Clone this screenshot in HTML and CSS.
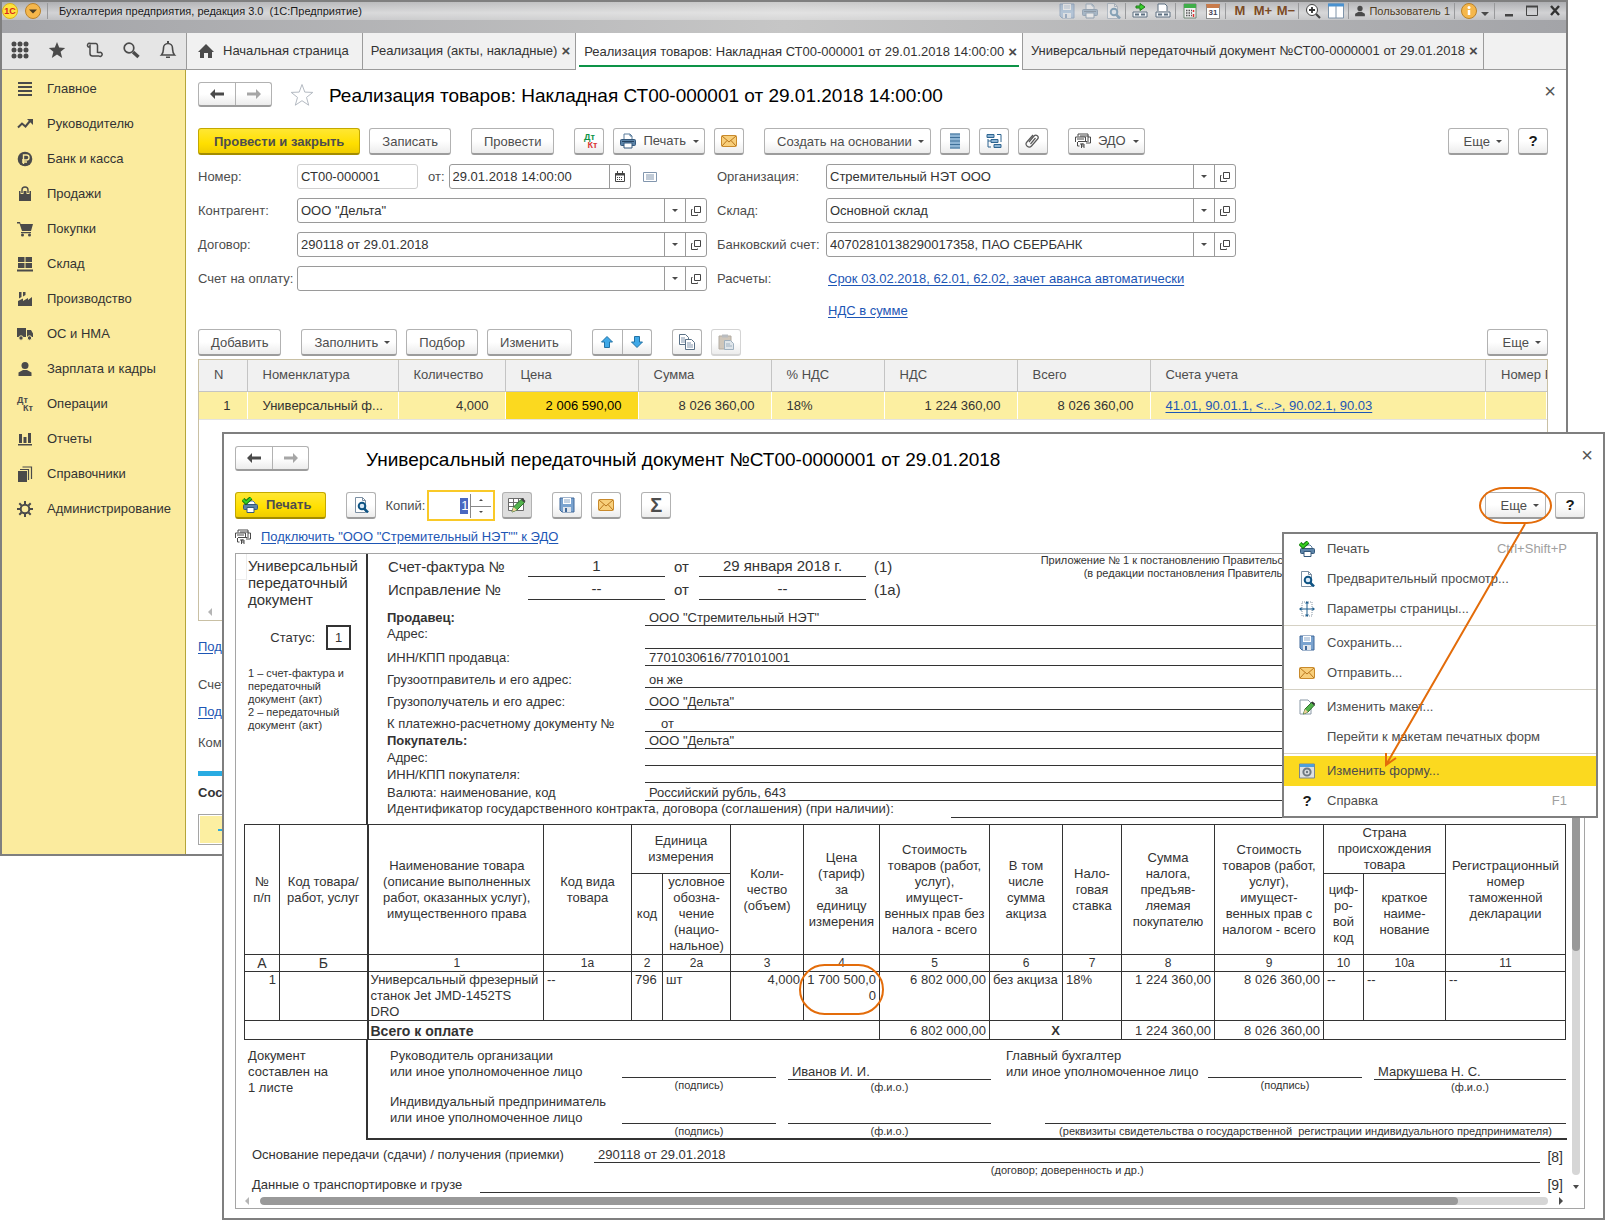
FILE: index.html
```html
<!DOCTYPE html>
<html lang="ru">
<head>
    <meta charset="UTF-8">
    <meta name="viewport" content="width=device-width, initial-scale=1.0">
    <title>Бухгалтерия предприятия, редакция 3.0</title>
    <link rel="stylesheet" href="styles.css">
</head>
<body>
    <!-- icon set -->
    <svg class="sprite" aria-hidden="true">
        <symbol id="i-save" viewBox="0 0 16 16"><path d="M1 1h14v14H3l-2-2z" fill="#7aa3cf" stroke="#41699a"/><path d="M4 1h8v6H4z" fill="#fff"/><path d="M5 3h6M5 5h6" stroke="#8aa7c8"/><path d="M4 10h8v5H4z" fill="#dfe5ec"/><path d="M6 11h2v4H6z" fill="#41699a"/></symbol>
        <symbol id="i-print" viewBox="0 0 16 16"><path d="M4 7V1h6l2 2v4" fill="#fff" stroke="#5b7d9c"/><path d="M10 1v2h2" fill="none" stroke="#5b7d9c"/><rect x="0.5" y="6.500" width="15" height="6" rx="1" fill="#5c84a8" stroke="#34587c"/><path d="M2 8.500h12" stroke="#23415f"/><path d="M4 10h8v5H4z" fill="#fff" stroke="#34587c"/></symbol>
        <symbol id="i-printok" viewBox="0 0 16 16"><path d="M5 8V4h6l2 2v2" fill="#fff" stroke="#5b7d9c"/><rect x="1.500" y="7.500" width="14" height="5" rx="1" fill="#5c84a8" stroke="#34587c"/><path d="M5 10.500h7v5H5z" fill="#fff" stroke="#34587c"/><path d="M1 2.500l3 3L9 1" fill="none" stroke="#12690f" stroke-width="4"/><path d="M1 2.500l3 3L9 1" fill="none" stroke="#35d01f" stroke-width="2.200"/></symbol>
        <symbol id="i-preview" viewBox="0 0 16 16"><path d="M2.500 .5h7l3 3v12h-10z" fill="#fff" stroke="#7b8fa3"/><path d="M9.500.5v3h3" fill="none" stroke="#7b8fa3"/><circle cx="9" cy="9" r="3.300" fill="#d8e9f7" stroke="#0f5484" stroke-width="2"/><path d="M11 11.500l4 4" stroke="#0f5484" stroke-width="2.500"/></symbol>
        <symbol id="i-mail" viewBox="0 0 16 16"><rect x="0.500" y="2.500" width="15" height="11" rx="1" fill="#f8cf7b" stroke="#c98a2c"/><path d="M1 3l7 6 7-6M1 13l5-5.500M15 13l-5-5.500" fill="none" stroke="#b9761c"/></symbol>
        <symbol id="i-list" viewBox="0 0 16 16"><path d="M3 .5h10v15H3z" fill="#8db4d4"/><path d="M3 1h10M3 4.500h10M3 8h10M3 11.500h10M3 15h10" stroke="#3f7099"/></symbol>
        <symbol id="i-tree" viewBox="0 0 16 16"><path d="M1 1.500h7v3H1zM5 6.500h7v3H5zM8 11.500h7v3H8z" fill="#8db4d4" stroke="#2e6590"/><path d="M2 6v8h3M11 1.500h4V9M2 8h3" fill="none" stroke="#2e6590"/></symbol>
        <symbol id="i-clip" viewBox="0 0 16 16"><path d="M4 9l5-6a2.200 2.200 0 0 1 3.600 3L6.500 13a3 3 0 0 1-4.600-4L8 2M5.500 11l5-6" fill="none" stroke="#5a5a5a" stroke-width="1.200"/></symbol>
        <symbol id="i-edo" viewBox="0 0 16 16"><path d="M3 3.500V1h10v8M5 3h8.500M.5 9V4h10v5M13 4h2.500v6H13M2 6h7M2.500 9v4h2M3 8.500h9V11M5 11h3" fill="none" stroke="#4a4a4a"/><path d="M6.500 15v-4h2.500v4M6.500 13H9" fill="none" stroke="#4a4a4a"/></symbol>
        <symbol id="i-open" viewBox="0 0 12 12"><path d="M4.500 1.500h6v6h-6zM2.500 4.500h-1v6h6v-1" fill="none" stroke="#444"/></symbol>
        <symbol id="i-cal" viewBox="0 0 12 12"><path d="M1.500 2.500h9v8h-9z" fill="none" stroke="#444"/><path d="M1 3.500h10" stroke="#444" stroke-width="2"/><path d="M3.500 0v3M8.500 0v3" stroke="#444"/><path d="M3 6.500h6M3 8.500h6" stroke="#444" stroke-dasharray="1 1"/></symbol>
        <symbol id="i-note" viewBox="0 0 14 12"><path d="M.5 1.500h13v9H.5z" fill="#fff" stroke="#8296ae"/><path d="M3 4h8M3 6h8M3 8h8" stroke="#8296ae"/></symbol>
        <symbol id="i-up" viewBox="0 0 14 14"><path d="M7 1.500l5.500 5.500H9.500v5.500h-5V7H1.500z" fill="#3fa9e8" stroke="#2272a5"/></symbol>
        <symbol id="i-down" viewBox="0 0 14 14"><path d="M7 12.500L1.500 7h3V1.500h5V7h3z" fill="#3fa9e8" stroke="#2272a5"/></symbol>
        <symbol id="i-copy" viewBox="0 0 16 16"><path d="M.5.500h6l3 3v7h-9z" fill="#fff" stroke="#5a7187"/><path d="M2 4h4M2 6h5M2 8h4" stroke="#8296ae"/><path d="M6.500 5.500h6l3 3v7h-9z" fill="#fff" stroke="#5a7187"/><path d="M8 9h4M8 11h6M8 13h6" stroke="#8296ae"/></symbol>
        <symbol id="i-paste" viewBox="0 0 16 16"><path d="M1 2h12v13H1z" fill="#cfc6ba" stroke="#b3aca2"/><path d="M4 .5h6v3H4z" fill="#b9bcc0"/><path d="M6.500 6.500h6l3 3v6h-9z" fill="#dfe5ea" stroke="#9fb0bf"/><path d="M8 10h4M8 12h6" stroke="#9fb0bf"/></symbol>
        <symbol id="i-edit" viewBox="0 0 18 16"><path d="M.5 1.500h15v12H.5zM.5 5.500h15M.5 9.500h9M5.500 1.500v12M10.500 1.500v6" fill="#fff" stroke="#6b6b6b"/><path d="M4 15l1.500-5L13 2.500l3.500 3L9 13z" fill="#53b34c" stroke="#2c6e2a"/><path d="M13 2.500l3.500 3 1-1.500-3-3z" fill="#444"/><path d="M4 15l1.500-5L9 13z" fill="#f0cf9a"/></symbol>
        <symbol id="i-editpage" viewBox="0 0 16 16"><path d="M1 1h8l3 3v11H1z" fill="#fff" stroke="#8a98a6"/><path d="M4.500 15L6 10l6.500-6.500 3 2.500L9 13z" fill="#53b34c" stroke="#2c6e2a"/><path d="M12 3.500l3.500 3 .5-2-2.500-2z" fill="#333"/><path d="M4.500 15L6 10l3 3z" fill="#f0cf9a"/></symbol>
        <symbol id="i-pageset" viewBox="0 0 16 16"><path d="M3 1h10v14H3z" fill="none" stroke="#8a98a6" stroke-dasharray="1 1"/><path d="M8 1v14M1 8h14" stroke="#1f5f8f"/><path d="M8 0l2 2.500H6zM8 16l2-2.500H6zM0 8l2.500-2v4zM16 8l-2.500-2v4z" fill="#1f5f8f"/></symbol>
        <symbol id="i-form" viewBox="0 0 16 16"><path d="M.5 1h15v14H.5z" fill="#dcdfe2" stroke="#7d868f"/><path d="M1 1h14v3H1z" fill="#4d9fdc"/><circle cx="8" cy="9" r="3.600" fill="none" stroke="#6e7882" stroke-width="2"/><circle cx="8" cy="9" r="1.200" fill="#6e7882"/></symbol>
        <symbol id="i-back" viewBox="0 0 14 12"><path d="M0 6l5-5v3.500h9v3H5V11z"/></symbol>
        <symbol id="i-fwd" viewBox="0 0 14 12"><path d="M14 6L9 1v3.500H0v3h9V11z"/></symbol>
        <symbol id="i-linkgo" viewBox="0 0 16 16"><path d="M4 3h4V.5L13 4 8 7.500V5H4z" fill="#37d02c" stroke="#217a1a"/><path d="M1 9h14v5H1z" fill="#f4f6f8" stroke="#5c6f80"/><path d="M3 11.500h4M9 11.500h4" stroke="#5c6f80" stroke-width="2"/></symbol>
        <symbol id="i-linkdoc" viewBox="0 0 16 16"><path d="M3 8V1h7l2 2v5" fill="#fff" stroke="#5c6f80"/><path d="M1 9h14v5H1z" fill="#f4f6f8" stroke="#5c6f80"/><path d="M3 11.500h4M9 11.500h4" stroke="#5c6f80" stroke-width="2"/></symbol>
        <symbol id="i-calc" viewBox="0 0 16 16"><path d="M2 1h12v14H2z" fill="#f1f1f1" stroke="#6f8573"/><path d="M2 1h12v4H2z" fill="#3fae49"/><path d="M4 7.500h6M4 10h6M4 12.500h6" stroke="#555" stroke-width="1.500" stroke-dasharray="1.500 1"/><path d="M11.500 7v2M11.500 11v3" stroke="#d33" stroke-width="1.500"/></symbol>
        <symbol id="i-zoom" viewBox="0 0 16 16"><circle cx="7" cy="7" r="5.500" fill="#fff" stroke="#444"/><path d="M7 4v6M4 7h6" stroke="#333" stroke-width="1.800"/><path d="M11 11l4 4" stroke="#444" stroke-width="2.200"/></symbol>
        <symbol id="i-panes" viewBox="0 0 16 16"><path d="M.5 1h15v14H.5z" fill="#fff" stroke="#7e93a8"/><path d="M0 .5h16v3H0z" fill="#4a92d0"/><path d="M8 3v12" stroke="#7e93a8"/></symbol>
        <symbol id="i-user" viewBox="0 0 16 16"><circle cx="8" cy="4.500" r="3.500"/><path d="M1.500 15v-3.500L6 9h4l4.500 2.500V15z"/></symbol>
        <symbol id="i-main" viewBox="0 0 16 16"><path d="M1 1h14v2H1zM1 5h14v2H1zM1 9h14v2H1zM1 13h14v2H1z"/></symbol>
        <symbol id="i-trend" viewBox="0 0 16 16"><path d="M1 11.500l4-4 3.500 3L13 5" fill="none" stroke="#4a4a4a" stroke-width="2"/><path d="M10 3h6v6z"/></symbol>
        <symbol id="i-rub" viewBox="0 0 16 16"><circle cx="8" cy="8" r="7.300"/><path d="M6.500 13V4h3a2.300 2.300 0 0 1 0 5H5M5 11h5" fill="none" stroke="#fbeb9e" stroke-width="1.400"/></symbol>
        <symbol id="i-bag" viewBox="0 0 16 16"><path d="M2 5h12v10H2z"/><path d="M5 8V4a3 3 0 0 1 6 0v4" fill="none" stroke="#fbeb9e" stroke-width="3"/><path d="M5 7V4a3 3 0 0 1 6 0v3" fill="none" stroke="#4a4a4a" stroke-width="1.400"/></symbol>
        <symbol id="i-cart" viewBox="0 0 16 16"><path d="M0 1h3l.6 2H16l-2 7H5L2.500 2.500H0zM4 11h10v1.300H4z"/><circle cx="5.500" cy="14" r="1.500"/><circle cx="12.500" cy="14" r="1.500"/></symbol>
        <symbol id="i-store" viewBox="0 0 16 16"><path d="M1 1h6.500v5H1zM8.500 1H15v5H8.500zM1 7h6.500v5H1zM8.500 7H15v5H8.500zM0 13.500h16v2H0z"/></symbol>
        <symbol id="i-plant" viewBox="0 0 16 16"><path d="M1 15V10l5-2.500V10l5-3v2l4-3v9zM2 1h2.500v5L2 7.500zM6 1h2.500v3L6 5.500z"/></symbol>
        <symbol id="i-truck" viewBox="0 0 16 16"><path d="M0 2h9v9H0zM10 4h4l2 3.500V11h-6z"/><circle cx="4" cy="12" r="2.200" stroke="#fbeb9e"/><circle cx="12.500" cy="12" r="2.200" stroke="#fbeb9e"/></symbol>
        <symbol id="i-bars" viewBox="0 0 16 16"><path d="M2 3h3v9H2zM6.500 6h3v6h-3zM11 2h3v10h-3zM1 13h14v1.600H1z"/></symbol>
        <symbol id="i-books" viewBox="0 0 16 16"><path d="M1 5h9v11H1z"/><path d="M3 3.500h8.500V14M5.500 1h9v12" fill="none" stroke="#4a4a4a" stroke-width="1.200"/></symbol>
        <symbol id="i-gear" viewBox="0 0 16 16"><circle cx="8" cy="8" r="4.300" fill="none" stroke="#4a4a4a" stroke-width="2"/><path d="M8 0v3M8 13v3M0 8h3M13 8h3M2.300 2.300l2.200 2.200M11.500 11.500l2.200 2.200M13.700 2.300l-2.200 2.200M4.500 11.500l-2.200 2.200" stroke="#4a4a4a" stroke-width="2"/></symbol>
        <symbol id="i-home" viewBox="0 0 16 16"><path d="M8 1l8 8h-2v6h-4v-5H6v5H2V9H0z"/></symbol>
    </svg>

    <div class="desktop">
        <div class="window main-window">
            <header class="titlebar">
                <div class="title-row">
                    <span class="logo">1С</span>
                    <svg class="round" viewBox="0 0 16 16"><circle cx="8" cy="8" r="7.500" fill="#f5b74b" stroke="#b9822b"/><path d="M4 6.500h8L8 10.500z" fill="#4a3c22"/></svg>
                    <i class="tb-sep"></i>
                    <span class="app-name">Бухгалтерия предприятия, редакция 3.0&nbsp; (1С:Предприятие)</span>
                    <div class="tb-tools">
                        <button class="tb dim" title="Сохранить"><svg><use href="#i-save"/></svg></button>
                        <button class="tb dim" title="Печать"><svg><use href="#i-print"/></svg></button>
                        <button class="tb dim" title="Просмотр"><svg><use href="#i-preview"/></svg></button>
                        <i class="tb-sep"></i>
                        <button class="tb" title="Перейти по ссылке"><svg><use href="#i-linkgo"/></svg></button>
                        <button class="tb" title="Получить ссылку"><svg><use href="#i-linkdoc"/></svg></button>
                        <i class="tb-sep"></i>
                        <button class="tb" title="Калькулятор"><svg><use href="#i-calc"/></svg></button>
                        <button class="tb" title="Календарь"><span class="day">31</span></button>
                        <i class="tb-sep"></i>
                        <button class="tb mem">M</button>
                        <button class="tb mem">M+</button>
                        <button class="tb mem">M−</button>
                        <i class="tb-sep"></i>
                        <button class="tb" title="Масштаб"><svg><use href="#i-zoom"/></svg></button>
                        <button class="tb" title="Панели"><svg><use href="#i-panes"/></svg></button>
                        <i class="tb-sep"></i>
                        <button class="tb-user"><svg><use href="#i-user"/></svg>Пользователь 1</button>
                        <i class="tb-sep"></i>
                        <button class="tb" title="О программе"><svg viewBox="0 0 16 16"><circle cx="8" cy="8" r="7.500" fill="#f5b74b" stroke="#b9822b"/><path d="M8 7v5" stroke="#fff" stroke-width="2.500"/><circle cx="8" cy="4.500" r="1.500" fill="#fff"/></svg></button>
                        <span class="caret"></span>
                        <i class="tb-sep"></i>
                        <button class="tb" title="Свернуть"><svg viewBox="0 0 16 16"><path d="M4 11h8v2.500H4z" fill="#444"/></svg></button>
                        <button class="tb" title="Развернуть"><svg viewBox="0 0 16 16"><path d="M2.500 3.500h11v9h-11z" fill="none" stroke="#444"/><path d="M2 3.500h12" stroke="#444" stroke-width="2"/></svg></button>
                        <button class="tb" title="Закрыть"><svg viewBox="0 0 16 16"><path d="M4 3l8 9M12 3l-8 9" stroke="#333" stroke-width="2.400"/></svg></button>
                    </div>
                </div>
            </header>

            <div class="tabs-row">
                <div class="quick">
                    <button title="Меню"><svg viewBox="0 0 18 18"><path d="M3 3h.01M9 3h.01M15 3h.01M3 9h.01M9 9h.01M15 9h.01M3 15h.01M9 15h.01M15 15h.01" stroke="#4a4a4a" stroke-width="5" stroke-linecap="round"/></svg></button>
                    <button title="Избранное"><svg viewBox="0 0 18 18"><path d="M9 1l2.200 5.600 6 .4-4.600 3.800L14.200 17 9 13.500 3.800 17l1.600-6.200L.8 7l6-.4z" fill="#4a4a4a"/></svg></button>
                    <button title="История"><svg viewBox="0 0 18 18"><path d="M5 6H3.500A2 2 0 1 1 5.500 2.500h5.500a2 2 0 0 1 1.500 2V12M5 3.500v9a2.500 2.500 0 0 0 2.500 2.500H14a2 2 0 1 0 .5-3.500h-2" fill="none" stroke="#4a4a4a" stroke-width="1.500"/></svg></button>
                    <button title="Поиск"><svg viewBox="0 0 18 18"><circle cx="7" cy="7" r="4.800" fill="none" stroke="#4a4a4a" stroke-width="1.700"/><path d="M11 11l5.500 5" stroke="#4a4a4a" stroke-width="3.400"/></svg></button>
                    <button title="Оповещения"><svg viewBox="0 0 18 18"><path d="M2.500 14c2-2 1.800-4 2-7a4.500 4.500 0 0 1 9 0c.2 3 0 5 2 7z" fill="none" stroke="#4a4a4a" stroke-width="1.600"/><path d="M7 15.500h4v1.500H7zM8 0h2v3H8z" fill="#4a4a4a"/></svg></button>
                </div>
                <nav class="tabs">
                    <a class="tab tab-home" href="#"><svg><use href="#i-home"/></svg>Начальная страница</a>
                    <a class="tab" href="#">Реализация (акты, накладные)<span class="x">×</span></a>
                    <a class="tab active" href="#">Реализация товаров: Накладная СТ00-000001 от 29.01.2018 14:00:00<span class="x">×</span></a>
                    <a class="tab" href="#">Универсальный передаточный документ №СТ00-0000001 от 29.01.2018<span class="x">×</span></a>
                </nav>
            </div>

            <div class="body-row">
                <nav class="sidebar">
                    <a href="#"><svg><use href="#i-main"/></svg>Главное</a>
                    <a href="#"><svg><use href="#i-trend"/></svg>Руководителю</a>
                    <a href="#"><svg><use href="#i-rub"/></svg>Банк и касса</a>
                    <a href="#"><svg><use href="#i-bag"/></svg>Продажи</a>
                    <a href="#"><svg><use href="#i-cart"/></svg>Покупки</a>
                    <a href="#"><svg><use href="#i-store"/></svg>Склад</a>
                    <a href="#"><svg><use href="#i-plant"/></svg>Производство</a>
                    <a href="#"><svg><use href="#i-truck"/></svg>ОС и НМА</a>
                    <a href="#"><svg><use href="#i-user"/></svg>Зарплата и кадры</a>
                    <a href="#"><span class="dtkt gray"><b>Дт</b><b>Кт</b></span>Операции</a>
                    <a href="#"><svg><use href="#i-bars"/></svg>Отчеты</a>
                    <a href="#"><svg><use href="#i-books"/></svg>Справочники</a>
                    <a href="#"><svg><use href="#i-gear"/></svg>Администрирование</a>
                </nav>

                <main class="content">
                    <div class="form-head">
                        <div class="pair nav-pair">
                            <button title="Назад"><svg><use href="#i-back"/></svg></button>
                            <button title="Вперед" class="off"><svg><use href="#i-fwd"/></svg></button>
                        </div>
                        <svg class="fav" viewBox="0 0 24 24"><path d="M12 1.500l2.800 7.600 8 .3-6.300 5 2.200 7.800-6.700-4.500-6.700 4.500 2.200-7.800-6.300-5 8-.3z" fill="#fff" stroke="#b4bac2"/></svg>
                        <h1>Реализация товаров: Накладная СТ00-000001 от 29.01.2018 14:00:00</h1>
                        <button class="close" title="Закрыть">×</button>
                    </div>

                    <div class="toolbar">
                        <button class="btn primary">Провести и закрыть</button>
                        <button class="btn">Записать</button>
                        <button class="btn gap">Провести</button>
                        <button class="btn icon gap" title="Дт/Кт"><span class="dtkt"><b>Дт</b><b>Кт</b></span></button>
                        <button class="btn with-icon"><svg><use href="#i-print"/></svg>Печать<span class="caret"></span></button>
                        <button class="btn icon" title="Отправить"><svg><use href="#i-mail"/></svg></button>
                        <button class="btn drop gap">Создать на основании<span class="caret"></span></button>
                        <button class="btn icon" title="Список"><svg><use href="#i-list"/></svg></button>
                        <button class="btn icon" title="Структура"><svg><use href="#i-tree"/></svg></button>
                        <button class="btn icon" title="Файлы"><svg><use href="#i-clip"/></svg></button>
                        <button class="btn with-icon gap"><svg><use href="#i-edo"/></svg>ЭДО<span class="caret"></span></button>
                        <button class="btn drop push">Еще<span class="caret"></span></button>
                        <button class="btn icon help">?</button>
                    </div>

                    <div class="fields">
                        <div class="fields-left">
                            <div class="field">
                                <label for="num">Номер:</label>
                                <input type="text" id="num" class="box num" value="СТ00-000001">
                                <label for="date" class="from">от:</label>
                                <div class="box date">
                                    <input type="text" id="date" value="29.01.2018 14:00:00">
                                    <button title="Календарь"><svg><use href="#i-cal"/></svg></button>
                                </div>
                                <svg class="note-icon"><use href="#i-note"/></svg>
                            </div>
                            <div class="field">
                                <label for="partner">Контрагент:</label>
                                <div class="box combo">
                                    <select id="partner"><option>ООО "Дельта"</option></select><span class="cell"><span class="caret small"></span></span>
                                    <button title="Открыть"><svg><use href="#i-open"/></svg></button>
                                </div>
                            </div>
                            <div class="field">
                                <label for="contract">Договор:</label>
                                <div class="box combo">
                                    <select id="contract"><option>290118 от 29.01.2018</option></select><span class="cell"><span class="caret small"></span></span>
                                    <button title="Открыть"><svg><use href="#i-open"/></svg></button>
                                </div>
                            </div>
                            <div class="field">
                                <label for="bill">Счет на оплату:</label>
                                <div class="box combo">
                                    <select id="bill"><option></option></select><span class="cell"><span class="caret small"></span></span>
                                    <button title="Открыть"><svg><use href="#i-open"/></svg></button>
                                </div>
                            </div>
                        </div>
                        <div class="fields-right">
                            <div class="field">
                                <label for="org">Организация:</label>
                                <div class="box combo">
                                    <select id="org"><option>Стремительный НЭТ ООО</option></select><span class="cell"><span class="caret small"></span></span>
                                    <button title="Открыть"><svg><use href="#i-open"/></svg></button>
                                </div>
                            </div>
                            <div class="field">
                                <label for="store">Склад:</label>
                                <div class="box combo">
                                    <select id="store"><option>Основной склад</option></select><span class="cell"><span class="caret small"></span></span>
                                    <button title="Открыть"><svg><use href="#i-open"/></svg></button>
                                </div>
                            </div>
                            <div class="field">
                                <label for="bank">Банковский счет:</label>
                                <div class="box combo">
                                    <select id="bank"><option>40702810138290017358, ПАО СБЕРБАНК</option></select><span class="cell"><span class="caret small"></span></span>
                                    <button title="Открыть"><svg><use href="#i-open"/></svg></button>
                                </div>
                            </div>
                            <div class="calc-row">
                                <span>Расчеты:</span>
                                <div class="calc-links">
                                    <a href="#">Срок 03.02.2018, 62.01, 62.02, зачет аванса автоматически</a>
                                    <a href="#">НДС в сумме</a>
                                </div>
                            </div>
                        </div>
                    </div>

                    <div class="toolbar grid-toolbar">
                        <button class="btn">Добавить</button>
                        <button class="btn drop gap">Заполнить<span class="caret"></span></button>
                        <button class="btn">Подбор</button>
                        <button class="btn">Изменить</button>
                        <div class="pair gap">
                            <button title="Вверх"><svg><use href="#i-up"/></svg></button>
                            <button title="Вниз"><svg><use href="#i-down"/></svg></button>
                        </div>
                        <button class="btn icon gap" title="Копировать"><svg><use href="#i-copy"/></svg></button>
                        <button class="btn icon off" title="Вставить"><svg><use href="#i-paste"/></svg></button>
                        <button class="btn drop push">Еще<span class="caret"></span></button>
                    </div>

                    <div class="grid-wrap">
                        <table class="grid">
                            <colgroup><col class="g48"><col class="g151"><col class="g107"><col class="g133"><col class="g133"><col class="g113"><col class="g133"><col class="g133"><col><col class="g61"></colgroup>
                            <thead>
                                <tr><th>N</th><th>Номенклатура</th><th>Количество</th><th>Цена</th><th>Сумма</th><th>% НДС</th><th>НДС</th><th>Всего</th><th>Счета учета</th><th>Номер ГТД</th></tr>
                            </thead>
                            <tbody>
                                <tr><td class="r">1</td><td>Универсальный ф...</td><td class="r">4,000</td><td class="r current">2 006 590,00</td><td class="r">8 026 360,00</td><td>18%</td><td class="r">1 224 360,00</td><td class="r">8 026 360,00</td><td><a href="#">41.01, 90.01.1, &lt;...&gt;, 90.02.1, 90.03</a></td><td></td></tr>
                            </tbody>
                        </table>
                        <span class="arrow-left"></span>
                    </div>

                    <div class="below">
                        <a href="#">Под</a>
                        <span>Счет</span>
                        <a href="#">Под</a>
                        <span>Ком</span>
                    </div>
                    <div class="blue-line"></div>
                    <b class="chat-title">Сос</b>
                    <div class="chat-box"><i></i></div>
                </main>
            </div>
        </div>

        <section class="window doc-window">
            <div class="form-head">
                <div class="pair nav-pair">
                    <button title="Назад"><svg><use href="#i-back"/></svg></button>
                    <button title="Вперед" class="off"><svg><use href="#i-fwd"/></svg></button>
                </div>
                <h2>Универсальный передаточный документ №СТ00-0000001 от 29.01.2018</h2>
                <button class="close" title="Закрыть">×</button>
            </div>

            <div class="toolbar">
                <button class="btn primary print"><svg><use href="#i-printok"/></svg>Печать</button>
                <button class="btn icon gap" title="Просмотр"><svg><use href="#i-preview"/></svg></button>
                <label for="copies" class="copies-label">Копий:</label>
                <div class="spin">
                    <input type="text" id="copies" value="1">
                    <div class="spin-buttons"><button title="Больше"><span class="tri-up"></span></button><button title="Меньше"><span class="tri-down"></span></button></div>
                </div>
                <button class="btn icon pressed" title="Редактирование"><svg class="wide"><use href="#i-edit"/></svg></button>
                <button class="btn icon gap" title="Сохранить"><svg><use href="#i-save"/></svg></button>
                <button class="btn icon" title="Отправить"><svg><use href="#i-mail"/></svg></button>
                <button class="btn icon gap sigma" title="Сумма">Σ</button>
                <div class="more push">
                    <button class="btn drop">Еще<span class="caret"></span></button>
                    <span class="callout"></span>
                </div>
                <button class="btn icon help">?</button>
            </div>

            <div class="edo-row"><svg><use href="#i-edo"/></svg><a href="#">Подключить "ООО "Стремительный НЭТ"" к ЭДО</a></div>

            <div class="sheet">
                <div class="paper">
                    <div class="upd-top">
                        <div class="upd-side">
                            <p class="upd-name">Универсальный передаточный документ</p>
                            <div class="status">Статус: <span>1</span></div>
                            <p class="tiny">1 – счет-фактура и передаточный<br>документ (акт)<br>2 – передаточный документ (акт)</p>
                        </div>
                        <div class="upd-main">
                            <div class="invoice">
                                <div>
                                    <div class="inv-row"><span class="l">Счет-фактура №</span><span class="v1">1</span><span class="from">от</span><span class="v2">29 января 2018 г.</span><span>(1)</span></div>
                                    <div class="inv-row"><span class="l">Исправление №</span><span class="v1">--</span><span class="from">от</span><span class="v2">--</span><span>(1а)</span></div>
                                </div>
                                <p class="tiny decree">Приложение № 1 к постановлению Правительства<br><span>(в редакции постановления Правительства</span></p>
                            </div>
                            <dl class="parties">
                                <dt class="bold">Продавец:</dt><dd>ООО "Стремительный НЭТ"</dd>
                                <dt class="addr">Адрес:</dt><dd></dd>
                                <dt>ИНН/КПП продавца:</dt><dd>7701030616/770101001</dd>
                                <dt class="tall">Грузоотправитель и его адрес:</dt><dd>он же</dd>
                                <dt class="tall">Грузополучатель и его адрес:</dt><dd>ООО "Дельта"</dd>
                                <dt class="tall">К платежно-расчетному документу №</dt><dd class="indent">от</dd>
                                <dt class="bold">Покупатель:</dt><dd>ООО "Дельта"</dd>
                                <dt>Адрес:</dt><dd></dd>
                                <dt>ИНН/КПП покупателя:</dt><dd></dd>
                                <dt>Валюта: наименование, код</dt><dd>Российский рубль, 643</dd>
                            </dl>
                            <div class="contract-id"><span>Идентификатор государственного контракта, договора (соглашения) (при наличии):</span><i></i></div>
                        </div>
                    </div>

                    <table class="upd">
                        <colgroup><col class="c35"><col class="c88"><col class="c176"><col class="c88"><col class="c31"><col class="c68"><col class="c73"><col class="c76"><col class="c110"><col class="c73"><col class="c59"><col class="c93"><col class="c109"><col class="c40"><col class="c82"><col></colgroup>
                        <thead>
                            <tr class="h1">
                                <th rowspan="2">№<br>п/п</th><th rowspan="2">Код товара/<br>работ, услуг</th><th rowspan="2" class="thick">Наименование товара<br>(описание выполненных<br>работ, оказанных услуг),<br>имущественного права</th><th rowspan="2">Код вида<br>товара</th><th colspan="2">Единица<br>измерения</th><th rowspan="2">Коли-<br>чество<br>(объем)</th><th rowspan="2">Цена<br>(тариф)<br>за<br>единицу<br>измерения</th><th rowspan="2">Стоимость<br>товаров (работ,<br>услуг),<br>имущест-<br>венных прав без<br>налога - всего</th><th rowspan="2">В том<br>числе<br>сумма<br>акциза</th><th rowspan="2">Нало-<br>говая<br>ставка</th><th rowspan="2">Сумма<br>налога,<br>предъяв-<br>ляемая<br>покупателю</th><th rowspan="2">Стоимость<br>товаров (работ,<br>услуг),<br>имущест-<br>венных прав с<br>налогом - всего</th><th colspan="2">Страна<br>происхождения<br>товара</th><th rowspan="2">Регистрационный<br>номер<br>таможенной<br>декларации</th>
                            </tr>
                            <tr class="h2"><th>код</th><th>условное<br>обозна-<br>чение<br>(нацио-<br>нальное)</th><th>циф-<br>ро-<br>вой<br>код</th><th>краткое<br>наиме-<br>нование</th></tr>
                            <tr class="nums"><th class="letter">А</th><th class="letter">Б</th><th class="thick">1</th><th>1а</th><th>2</th><th>2а</th><th>3</th><th>4</th><th>5</th><th>6</th><th>7</th><th>8</th><th>9</th><th>10</th><th>10а</th><th>11</th></tr>
                        </thead>
                        <tbody>
                            <tr class="item"><td class="r">1</td><td></td><td class="thick">Универсальный фрезерный станок Jet JMD-1452TS DRO</td><td>--</td><td>796</td><td>шт</td><td class="r">4,000</td><td class="r price">1 700 500,0<br>0<span class="callout"></span></td><td class="r">6 802 000,00</td><td>без акциза</td><td>18%</td><td class="r">1 224 360,00</td><td class="r">8 026 360,00</td><td>--</td><td>--</td><td>--</td></tr>
                            <tr class="total"><td colspan="2"></td><td colspan="6" class="thick total-name">Всего к оплате</td><td class="r">6 802 000,00</td><td colspan="2" class="c">Х</td><td class="r">1 224 360,00</td><td class="r">8 026 360,00</td><td colspan="3"></td></tr>
                        </tbody>
                    </table>

                    <div class="upd-bottom">
                        <p class="pages">Документ<br>составлен на<br>1 листе</p>
                        <div class="signs">
                            <div class="sign-row">
                                <span class="who">Руководитель организации<br>или иное уполномоченное лицо</span>
                                <div class="sign s1"><span></span><small>(подпись)</small></div>
                                <div class="sign s2"><span>Иванов И. И.</span><small>(ф.и.о.)</small></div>
                                <span class="who2">Главный бухгалтер<br>или иное уполномоченное лицо</span>
                                <div class="sign s1"><span></span><small>(подпись)</small></div>
                                <div class="sign s3"><span>Маркушева Н. С.</span><small>(ф.и.о.)</small></div>
                            </div>
                            <div class="sign-row">
                                <span class="who">Индивидуальный предприниматель<br>или иное уполномоченное лицо</span>
                                <div class="sign s1"><span></span><small>(подпись)</small></div>
                                <div class="sign s2"><span></span><small>(ф.и.о.)</small></div>
                                <div class="sign s4"><span></span><small>(реквизиты свидетельства о государственной&nbsp; регистрации индивидуального предпринимателя)</small></div>
                            </div>
                        </div>
                    </div>

                    <div class="basis">
                        <span>Основание передачи (сдачи) / получения (приемки)</span>
                        <div class="sign"><span>290118 от 29.01.2018</span><small>(договор; доверенность и др.)</small></div>
                        <span class="ref">[8]</span>
                    </div>
                    <div class="basis cargo">
                        <span>Данные о транспортировке и грузе</span>
                        <div class="sign"><span></span></div>
                        <span class="ref">[9]</span>
                    </div>
                </div>
                <div class="vscroll"><div class="track"><i></i></div><span class="tri-down dark"></span></div>
                <div class="hscroll"><span class="arrow-left"></span><div class="track"><i></i></div><span class="arrow-right"></span></div>
            </div>

            <div class="menu" role="menu">
                <button role="menuitem"><svg><use href="#i-printok"/></svg>Печать<kbd>Ctrl+Shift+P</kbd></button>
                <button role="menuitem"><svg><use href="#i-preview"/></svg>Предварительный просмотр...</button>
                <button role="menuitem"><svg><use href="#i-pageset"/></svg>Параметры страницы...</button>
                <hr>
                <button role="menuitem"><svg><use href="#i-save"/></svg>Сохранить...</button>
                <button role="menuitem"><svg><use href="#i-mail"/></svg>Отправить...</button>
                <hr>
                <button role="menuitem"><svg><use href="#i-editpage"/></svg>Изменить макет...</button>
                <button role="menuitem"><span class="mi"></span>Перейти к макетам печатных форм</button>
                <hr>
                <button role="menuitem" class="hot"><svg><use href="#i-form"/></svg>Изменить форму...</button>
                <button role="menuitem"><span class="mi">?</span>Справка<kbd>F1</kbd></button>
            </div>
            <svg class="pointer" viewBox="0 0 146 246"><path d="M143 1L4 242M4 230v12l10-7" fill="none" stroke="#e36c0a" stroke-width="2"/></svg>
        </section>
    </div>
</body>
</html>
```
FILE: styles.css
```css
* {
    box-sizing: border-box;
}

body {
    margin: 0;
    background: #fff;
    font-family: "Liberation Sans", Arial, sans-serif;
    font-size: 13px;
    line-height: 16px;
    color: #333;
}

button, input, select {
    font: inherit;
    color: inherit;
    margin: 0;
    padding: 0;
    border: 0;
    background: none;
    border-radius: 0;
}

p, h1, h2, dl, dd {
    margin: 0;
}

svg {
    flex: none;
    width: 16px;
    height: 16px;
    fill: #4a4a4a;
}

.sprite {
    position: absolute;
    width: 0;
    height: 0;
}

a {
    color: #1d56b5;
    text-underline-offset: 2px;
}

.desktop {
    position: relative;
    min-height: 1221px;
}

.window {
    border: 2px solid #7f7f7f;
    background: #fff;
}

.main-window {
    margin-right: 41px;
}

/* title bar */
.titlebar {
    height: 31px;
    background: linear-gradient(90deg, #a3a4a8, #c6c6c6 50%, #a3a4a8);
}

.title-row {
    display: flex;
    align-items: center;
    height: 18px;
    background: linear-gradient(rgba(255, 255, 255, 0.1), rgba(255, 255, 255, 0.5) 60%, rgba(255, 255, 255, 0.3));
}

.logo {
    width: 16px;
    height: 16px;
    margin-right: 7px;
    border: 1px solid #d9b51c;
    border-radius: 50%;
    background: #ffe23d;
    font-size: 9px;
    font-weight: bold;
    line-height: 14px;
    text-align: center;
    color: #d8271c;
}

.round {
    margin-right: 5px;
}

.app-name {
    margin-left: 9px;
    font-size: 11px;
    color: #1a1a1a;
}

.tb-tools {
    display: flex;
    align-items: center;
    margin-left: auto;
}

.tb-sep {
    width: 1px;
    height: 16px;
    margin: 0 2px 0 1px;
    background: #98999b;
}

.tb {
    display: flex;
    align-items: center;
    justify-content: center;
    width: 23px;
    height: 18px;
}

.tb.dim {
    opacity: 0.4;
}

.tb.mem {
    font-weight: bold;
    color: #7c4a24;
}

.tb-user {
    display: flex;
    align-items: center;
    gap: 3px;
    padding: 0 3px;
    font-size: 11px;
    color: #4d3b22;
}

.tb-user svg {
    width: 12px;
    height: 12px;
}

.day {
    width: 14px;
    height: 15px;
    border: 1px solid #8b8b8b;
    border-top: 4px solid #c97b4a;
    background: #fff;
    font-size: 8px;
    font-weight: bold;
    line-height: 10px;
    color: #445;
}

.caret {
    display: inline-block;
    border: 3px solid transparent;
    border-top-color: #4a4a4a;
    border-bottom: 0;
}

.tb-tools .caret {
    margin: 5px 4px 0 1px;
    border-width: 4px 4px 0;
}

/* tabs */
.tabs-row {
    display: flex;
    height: 37px;
    background: #f1f1f1;
    border-bottom: 1px solid #9b9b9b;
}

.quick {
    display: flex;
    align-items: center;
    width: 184px;
    background: #e5e5e5;
}

.quick button {
    width: 37px;
    height: 20px;
}

.quick svg {
    width: 18px;
    height: 18px;
}

.tabs {
    display: flex;
}

.tab {
    display: flex;
    align-items: center;
    padding: 0 5px 0 8px;
    border-left: 1px solid #9b9b9b;
    color: #333;
    text-decoration: none;
    white-space: nowrap;
}

.tab:last-child {
    border-right: 1px solid #9b9b9b;
}

.tab-home {
    gap: 9px;
    padding: 0 13px 0 11px;
}

.tab .x {
    margin-left: 4px;
    font-size: 15px;
    font-weight: bold;
    color: #4a4a4a;
}

.tab.active {
    height: 37px;
    background: linear-gradient(#0d9347, #0d9347) 3px 32px / calc(100% - 6px) 2px no-repeat #fff;
}

/* sidebar */
.body-row {
    display: flex;
}

.sidebar {
    width: 184px;
    padding-top: 1px;
    background: #fbeb9e;
    border-right: 1px solid #b5a53a;
}

.sidebar a {
    display: flex;
    align-items: center;
    gap: 14px;
    height: 35px;
    padding-left: 15px;
    color: #333;
    text-decoration: none;
}

.dtkt {
    display: flex;
    flex-direction: column;
    width: 16px;
    font-size: 9px;
    line-height: 8px;
    color: #0d9347;
}

.dtkt b + b {
    align-self: flex-end;
    color: #d93636;
}

.dtkt.gray, .dtkt.gray b + b {
    color: #4a4a4a;
}

/* form */
.content {
    flex: 1;
    min-width: 0;
    padding: 12px 18px 9px 12px;
}

.form-head {
    display: flex;
    align-items: center;
    height: 25px;
}

.form-head h1, .form-head h2 {
    padding-top: 2px;
    font-size: 19px;
    font-weight: normal;
    line-height: 24px;
    color: #000;
    white-space: nowrap;
}

.form-head h2 {
    margin-left: 57px;
}

.fav {
    width: 24px;
    height: 24px;
    margin: 0 15px 0 18px;
}

.close {
    align-self: flex-start;
    margin: 1px -8px 0 auto;
    font-size: 20px;
    line-height: 16px;
    color: #555;
}

.pair {
    display: flex;
    border: 1px solid #b2b2b2;
    border-bottom: 2px solid #9c9c9c;
    border-radius: 3px;
    background: linear-gradient(#fff 50%, #ececec);
}

.pair button {
    display: flex;
    align-items: center;
    justify-content: center;
    width: 29px;
    height: 24px;
}

.pair svg {
    width: 14px;
    height: 14px;
}

.pair button + button {
    border-left: 1px solid #b2b2b2;
}

.nav-pair button {
    width: 36px;
    height: 22px;
}

.nav-pair svg {
    height: 12px;
}

.nav-pair .off svg {
    fill: #a6a6a6;
}

.toolbar {
    display: flex;
    align-items: center;
    gap: 9px;
    height: 27px;
    margin-top: 21px;
}

.btn {
    display: flex;
    align-items: center;
    justify-content: center;
    height: 27px;
    padding: 1px 12px 0;
    border: 1px solid #b2b2b2;
    border-bottom: 2px solid #9c9c9c;
    border-radius: 3px;
    background: linear-gradient(#fff 50%, #ececec);
    color: #4d4d4d;
    white-space: nowrap;
}

.btn.icon {
    width: 30px;
    padding: 0;
}

.btn.primary {
    padding: 1px 15px 0;
    border-color: #c3a800;
    border-bottom-color: #a38c00;
    background: linear-gradient(#ffe733, #ffdf00 60%, #efcc00);
    font-weight: bold;
}

.btn.print {
    gap: 8px;
    padding: 0 14px 0 6px;
}

.btn.drop {
    justify-content: flex-end;
    min-width: 61px;
    padding-right: 6px;
}

.btn.with-icon {
    gap: 7px;
    padding: 0 5px 0 6px;
}

.btn.drop .caret {
    margin-left: 6px;
}

.btn.pressed {
    background: #dedede;
}

.btn.off {
    border-color: #d4d4d4;
}

.btn.help {
    font-size: 15px;
    font-weight: bold;
    color: #1a1a1a;
}

.btn.sigma {
    font-size: 20px;
    font-weight: bold;
}

.wide {
    width: 18px;
}

.gap {
    margin-left: 11px;
}

.push {
    margin-left: auto;
}

.fields {
    display: flex;
    gap: 10px;
    margin-top: 9px;
}

.fields-left, .fields-right {
    display: flex;
    flex-direction: column;
    gap: 9px;
    width: 509px;
}

.fields-right {
    width: 519px;
}

.field {
    display: flex;
    align-items: center;
    height: 25px;
}

.field > label:first-child {
    width: 99px;
}

.fields-right .field > label:first-child {
    width: 109px;
}

.field label, .copies-label, .calc-row > span, .below span {
    color: #4d4d4d;
    white-space: nowrap;
}

.box {
    display: flex;
    height: 25px;
    border: 1px solid #9a9a9a;
    border-radius: 3px;
}

.box input, .box select {
    flex: 1;
    min-width: 0;
    padding-left: 3px;
    appearance: none;
}

.num {
    width: 121px;
    padding-left: 3px;
    border-color: #cfcfcf;
}

.field .from {
    margin: 0 4px 0 10px;
}

.date {
    width: 182px;
}

.note-icon {
    width: 14px;
    height: 12px;
    margin-left: 12px;
}

.combo {
    flex: 1;
}

.box button, .cell {
    display: flex;
    align-items: center;
    justify-content: center;
    width: 21px;
    border-left: 1px solid #9a9a9a;
}

.box button svg {
    width: 12px;
    height: 12px;
}

.calc-row {
    display: flex;
    padding-top: 5px;
}

.calc-row > span {
    width: 111px;
}

.calc-links {
    display: flex;
    flex-direction: column;
    gap: 16px;
}

/* goods grid */
.grid-toolbar {
    margin-top: 10px;
}

.grid-wrap {
    height: 262px;
    margin-top: 3px;
    border: 1px solid #c9c0a4;
    overflow: hidden;
}

.grid {
    width: 100%;
    table-layout: fixed;
    border-collapse: collapse;
}

.grid th, .grid td {
    padding: 0 16px 0 15px;
    border-right: 1px solid #fff;
    text-align: left;
    font-weight: normal;
    white-space: nowrap;
    overflow: hidden;
}

.grid th {
    height: 31px;
    background: #f1f1f1;
    border-right-color: #c4c4c4;
    border-bottom: 1px solid #c4c4c4;
    color: #4d4d4d;
}

.grid td {
    height: 28px;
    padding-top: 1px;
    background: #fcefa1;
    border-bottom: 1px solid #e3e3e3;
}

.grid .r {
    text-align: right;
}

.grid .current {
    background: #fbd91f;
    color: #000;
}

.grid th:last-child {
    padding-right: 0;
    border-right: 0;
}

.g48 { width: 48px; }
.g61 { width: 61px; }
.g107 { width: 107px; }
.g113 { width: 113px; }
.g133 { width: 133px; }
.g151 { width: 151px; }

.arrow-left, .arrow-right {
    display: block;
    width: 0;
    border: 4px solid transparent;
    border-right-color: #b5b5b5;
    border-left: 0;
}

.arrow-right {
    border-left: 4px solid #4a4a4a;
    border-right: 0;
}

.grid-wrap .arrow-left {
    margin: 188px 0 0 9px;
}

.below {
    display: grid;
    grid-template-rows: 38px 27px 31px 36px;
    justify-items: start;
    margin-top: 18px;
}

.blue-line {
    height: 5px;
    background: #29abe2;
}

.chat-title {
    display: block;
    margin: 9px 0 13px;
}

.chat-box {
    width: 200px;
    height: 31px;
    padding: 14px 0 0 19px;
    border: 1px solid #a5a5a5;
    background: #fcefa1;
    box-shadow: inset 0 0 0 1px #fff;
}

.chat-box i {
    display: block;
    width: 12px;
    height: 2px;
    background: #29abe2;
}

/* printed document window */
.doc-window {
    position: absolute;
    top: 432px;
    left: 222px;
    right: 4px;
    padding: 12px 18px 9px 11px;
}

.spin {
    display: flex;
    align-items: center;
    justify-content: flex-end;
    width: 68px;
    height: 31px;
    margin: 0 -2px 0 -7px;
    padding-right: 2px;
    border: 2px solid #f9c928;
}

.spin input {
    width: 8px;
    height: 16px;
    margin-right: 2px;
    background: #4a68c0;
    color: #fff;
    text-align: right;
}

.spin-buttons {
    border-left: 1px solid #888;
}

.spin-buttons button {
    display: flex;
    align-items: center;
    justify-content: center;
    width: 20px;
    height: 12px;
}

.spin-buttons button + button {
    border-top: 1px solid #888;
}

.tri-up, .tri-down {
    border: 2px solid transparent;
    border-bottom-color: #4a4a4a;
    border-top: 0;
}

.tri-down {
    border-top: 2px solid #4a4a4a;
    border-bottom: 0;
}

.tri-down.dark {
    width: 0;
    border-width: 4px 3px 0;
}

.caret.small {
    border-width: 3px 3px 0;
}

.more {
    position: relative;
}

.callout {
    position: absolute;
    inset: -5px -6px;
    border: 2px solid #e36c0a;
    border-radius: 26px / 19px;
    pointer-events: none;
}

.edo-row {
    display: flex;
    align-items: center;
    gap: 10px;
    margin: 10px 0 8px;
}

.sheet {
    display: grid;
    grid-template-columns: 1fr 17px;
    border: 1px solid #a5a5a5;
}

.paper {
    min-width: 0;
}

.tiny, .sign small {
    font-size: 11px;
    line-height: 13px;
}

.upd-top {
    display: flex;
    height: 270px;
}

.upd-side {
    width: 130px;
    padding: 3px 0 0 12px;
    background:
        linear-gradient(#ececec, #ececec) 10px 0 / 1px 26px no-repeat,
        linear-gradient(#ececec, #ececec) 0 25px / 11px 1px no-repeat;
}

.upd-name {
    font-size: 15px;
    line-height: 17px;
}

.status {
    display: flex;
    align-items: center;
    justify-content: flex-end;
    gap: 11px;
    margin: 17px 15px 17px 0;
}

.status span {
    width: 25px;
    height: 25px;
    border: 2px solid #333;
    line-height: 21px;
    text-align: center;
}

.upd-main {
    flex: 1;
    min-width: 0;
    padding-left: 19px;
    border-left: 2px solid #333;
}

.invoice {
    display: flex;
    margin-bottom: 9px;
}

.inv-row {
    display: flex;
    align-items: flex-end;
    height: 23px;
    padding-left: 1px;
    font-size: 15px;
    line-height: 20px;
    white-space: nowrap;
}

.inv-row .l {
    width: 140px;
}

.inv-row .v1, .inv-row .v2 {
    width: 137px;
    border-bottom: 1px solid #333;
    text-align: center;
}

.inv-row .v2 {
    width: 167px;
    margin-right: 8px;
}

.inv-row .from {
    width: 34px;
    padding-left: 9px;
}

.decree {
    margin-left: 140px;
    white-space: nowrap;
}

.decree span {
    padding-left: 43px;
}

.parties {
    display: grid;
    grid-template-columns: 258px 1fr;
    grid-template-rows: 17px 23px 17px 22px 22px 22px 17px 17px 17px 18px;
}

.parties dt {
    align-self: end;
}

.parties .addr {
    align-self: start;
}

.parties dd {
    display: flex;
    align-items: flex-end;
    padding-left: 4px;
    border-bottom: 1px solid #333;
    line-height: 14px;
}

.parties .indent {
    padding-left: 16px;
}

.bold {
    font-weight: bold;
}

.contract-id {
    display: flex;
    height: 17px;
    white-space: nowrap;
}

.contract-id span {
    width: 564px;
}

.contract-id i {
    flex: 1;
    border-bottom: 1px solid #333;
}

.upd {
    width: calc(100% - 9px);
    margin-left: 8px;
    table-layout: fixed;
    border-collapse: collapse;
}

.upd th, .upd td {
    padding: 0 3px;
    border: 1px solid #333;
    font-weight: normal;
    vertical-align: top;
}

.upd th {
    padding: 0;
    vertical-align: middle;
    white-space: nowrap;
}

.upd .thick {
    padding-left: 2px;
    border-left: 2px solid #333;
}

.upd .h1 { height: 49px; }
.upd .h2 { height: 81px; }
.upd .nums { height: 17px; font-size: 12px; line-height: 14px; }
.upd .item { height: 49px; }
.upd .total { height: 19px; }

.upd .letter {
    font-size: 14px;
}

.upd .r {
    text-align: right;
}

.upd .c {
    text-align: center;
    font-weight: bold;
}

.upd .total td {
    vertical-align: bottom;
}

.upd .total-name {
    font-size: 14px;
    font-weight: bold;
}

.upd .price {
    position: relative;
}

.price .callout {
    inset: -8px -5px 5px;
    border-radius: 26px;
}

.c31 { width: 31px; }
.c35 { width: 35px; }
.c40 { width: 40px; }
.c59 { width: 59px; }
.c68 { width: 68px; }
.c73 { width: 73px; }
.c76 { width: 76px; }
.c82 { width: 82px; }
.c88 { width: 88px; }
.c93 { width: 93px; }
.c109 { width: 109px; }
.c110 { width: 110px; }
.c176 { width: 176px; }

.upd-bottom {
    display: flex;
    height: 100px;
}

.pages {
    width: 130px;
    padding: 8px 0 0 12px;
}

.signs {
    flex: 1;
    padding: 8px 1px 0 22px;
    border-left: 2px solid #333;
    border-bottom: 2px solid #333;
}

.sign-row {
    display: flex;
    height: 44px;
    margin-bottom: 2px;
    white-space: nowrap;
}

.who {
    width: 232px;
}

.who2 {
    width: 202px;
    margin-left: 15px;
}

.sign {
    display: flex;
    flex-direction: column;
}

.sign span {
    height: 32px;
    padding: 16px 0 0 4px;
    border-bottom: 1px solid #333;
}

.sign small {
    line-height: 14px;
    text-align: center;
}

.s1 {
    width: 154px;
}

.s2 {
    width: 203px;
    margin-left: 12px;
}

.s3 {
    flex: 1;
    margin-left: 12px;
}

.s4 {
    flex: 1;
    margin-left: 54px;
}

.basis {
    display: flex;
    height: 37px;
    padding: 7px 4px 0 16px;
    white-space: nowrap;
}

.basis > span:first-child {
    width: 342px;
}

.basis .sign {
    flex: 1;
}

.basis .sign span {
    height: 16px;
    padding-top: 0;
}

.basis .ref {
    margin-left: 7px;
    padding-top: 2px;
    font-size: 14px;
}

.cargo {
    height: 20px;
    padding-top: 0;
}

.cargo > span:first-child {
    width: 228px;
}

.cargo .ref {
    padding-top: 0;
}

.vscroll {
    display: flex;
    flex-direction: column;
    align-items: center;
    gap: 10px;
    padding-bottom: 8px;
}

.track {
    flex: 1;
    width: 8px;
    border-radius: 4px;
    background: #d6d6d6;
    overflow: hidden;
}

.track i {
    display: block;
    width: 100%;
    height: 64%;
    border-radius: 4px;
    background: #999;
}

.hscroll {
    display: flex;
    align-items: center;
    gap: 11px;
    height: 11px;
    padding: 0 4px 3px 9px;
}

.hscroll .track {
    height: 8px;
}

.hscroll .track i {
    width: 93%;
    height: 8px;
}

/* dropdown menu */
.menu {
    position: absolute;
    top: 98px;
    right: 5px;
    width: 316px;
    border: 2px solid #7f7f7f;
    background: #fff;
}

.menu button {
    display: flex;
    align-items: center;
    width: 100%;
    height: 30px;
    padding: 0 29px 0 15px;
    color: #4d4d4d;
    white-space: nowrap;
}

.menu svg, .mi {
    width: 16px;
    margin-right: 12px;
}

.mi {
    text-align: center;
    font-size: 15px;
    font-weight: bold;
    color: #1a1a1a;
}

.menu kbd {
    margin-left: auto;
    font: inherit;
    color: #a0a0a0;
}

.menu hr {
    height: 1px;
    margin: 1px 0 2px;
    border: 0;
    background: #d5d1c4;
}

.menu .hot {
    background: #fbd91f;
}

.pointer {
    position: absolute;
    top: 89px;
    right: 75px;
    width: 146px;
    height: 246px;
}
```
